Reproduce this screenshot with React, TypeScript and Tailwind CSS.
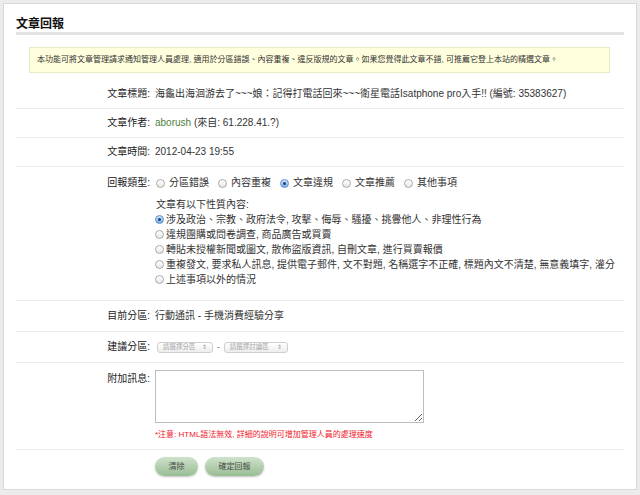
import React from 'react';

const font = { fontFamily: '"Liberation Sans", "Noto Sans CJK TC", sans-serif' };

function Radio({ checked }: { checked?: boolean }) {
  return checked ? (
    <span className="inline-flex items-center justify-center w-[9px] h-[9px] rounded-full border border-[#5b8fcf] bg-gradient-to-b from-[#cfe3fb] to-[#7fb0ec] shrink-0">
      <span className="w-[3px] h-[3px] rounded-full bg-[#1d3f6e]" />
    </span>
  ) : (
    <span className="inline-block w-[9px] h-[9px] rounded-full border border-[#a9a9a9] bg-gradient-to-b from-white to-[#e6e6e6] shrink-0" />
  );
}

function Row({ label, children, className = '' }: { label: string; children: React.ReactNode; className?: string }) {
  return (
    <div className={`flex border-b border-[#ececec] ${className}`}>
      <div className="w-[134px] shrink-0 text-right text-[10px] leading-[14px] text-[#222]">{label}</div>
      <div className="pl-[5px] text-[10px] leading-[14px] text-[#333]">{children}</div>
    </div>
  );
}

function Select({ text, w }: { text: string; w: string }) {
  return (
    <span className={`inline-flex items-center justify-between h-[11px] px-[5px] rounded-[3px] border border-[#cfcfcf] bg-gradient-to-b from-white to-[#ededed] text-[6.5px] leading-none text-[#a0a0a0] ${w}`}>
      <span>{text}</span>
      <span className="text-[6px]">⇕</span>
    </span>
  );
}

const reasons = [
  '涉及政治、宗教、政府法令, 攻擊、侮辱、騷擾、挑釁他人、非理性行為',
  '違規團購或問卷調查, 商品廣告或買賣',
  '轉貼未授權新聞或圖文, 散佈盜版資訊, 自刪文章, 進行買賣報價',
  '重複發文, 要求私人訊息, 提供電子郵件, 文不對題, 名稱選字不正確, 標題內文不清楚, 無意義填字, 灌分',
  '上述事項以外的情況',
];

const types = ['分區錯誤', '內容重複', '文章違規', '文章推薦', '其他事項'];

export default function App() {
  return (
    <div className="w-[640px] h-[495px] bg-[#ececec] p-[3px] overflow-hidden" style={font}>
      <div className="h-[487px] bg-white border border-[#d9d9d9] px-[12px]">
        <div className="pt-[12px] border-b-[3px] border-[#e3e3e3]">
          <h1 className="text-[12px] leading-[16px] font-bold text-[#111]">文章回報</h1>
        </div>

        <div className="mt-[12px] ml-[13px] mr-[14px] h-[26px] flex items-center pl-[7px] bg-[#ffffdd] border border-[#e9e9c4] text-[8px] text-[#333]">
          本功能可將文章管理請求通知管理人員處理, 適用於分區錯誤、內容重複、違反版規的文章。如果您覺得此文章不錯, 可推薦它登上本站的精選文章。
        </div>

        <div className="mt-[7px]">
          <Row label="文章標題:" className="py-[7px]">
            海龜出海洄游去了~~~娘：記得打電話回來~~~衛星電話Isatphone pro入手!! (編號: 35383627)
          </Row>
          <Row label="文章作者:" className="py-[7px]">
            <span className="text-[#4f7f3f]">aborush</span> (來自: 61.228.41.?)
          </Row>
          <Row label="文章時間:" className="py-[7px]">
            2012-04-23 19:55
          </Row>
          <Row label="回報類型:" className="pt-[9px] pb-[13px]">
            <div className="flex items-center gap-[9px] pl-[1px]">
              {types.map((t, i) => (
                <span key={t} className="flex items-center gap-[4px]">
                  <Radio checked={i === 2} />
                  {t}
                </span>
              ))}
            </div>
            <div className="mt-[8px] pl-[1px]">文章有以下性質內容:</div>
            <div className="leading-[15px]">
              {reasons.map((r, i) => (
                <div key={r} className="flex items-center gap-[2px] whitespace-nowrap">
                  <Radio checked={i === 0} />
                  {r}
                </div>
              ))}
            </div>
          </Row>
          <Row label="目前分區:" className="py-[8px]">
            行動通訊 - 手機消費經驗分享
          </Row>
          <Row label="建議分區:" className="py-[8px]">
            <div className="flex items-center h-[14px] gap-[4px] pl-[2px]">
              <Select text="請選擇分區" w="w-[56px]" />
              <span className="text-[8px]">-</span>
              <Select text="請選擇討論區" w="w-[64px]" />
            </div>
          </Row>
          <div className="flex border-b border-[#ececec] pt-[7px] pb-[8px]">
            <div className="w-[134px] shrink-0 text-right text-[10px] leading-[14px] text-[#222] pt-[2px]">附加訊息:</div>
            <div className="pl-[5px]">
              <textarea className="block w-[269px] h-[53px] border border-[#bdbdbd] bg-white resize-y" />
              <div className="mt-[6px] text-[8px] leading-[12px] text-[#f0202a]">*注意: HTML語法無效, 詳細的說明可增加管理人員的處理速度</div>
            </div>
          </div>
          <div className="flex gap-[7px] pt-[7px] pl-[139px]">
            <button className="w-[43px] h-[19px] rounded-full bg-gradient-to-b from-[#cfe2cb] to-[#98bd93] text-[8px] text-[#4a4a4a] shadow-[0_1px_2px_rgba(0,0,0,0.25)]">清除</button>
            <button className="w-[59px] h-[19px] rounded-full bg-gradient-to-b from-[#cfe2cb] to-[#98bd93] text-[8px] text-[#4a4a4a] shadow-[0_1px_2px_rgba(0,0,0,0.25)]">確定回報</button>
          </div>
        </div>
      </div>
    </div>
  );
}
